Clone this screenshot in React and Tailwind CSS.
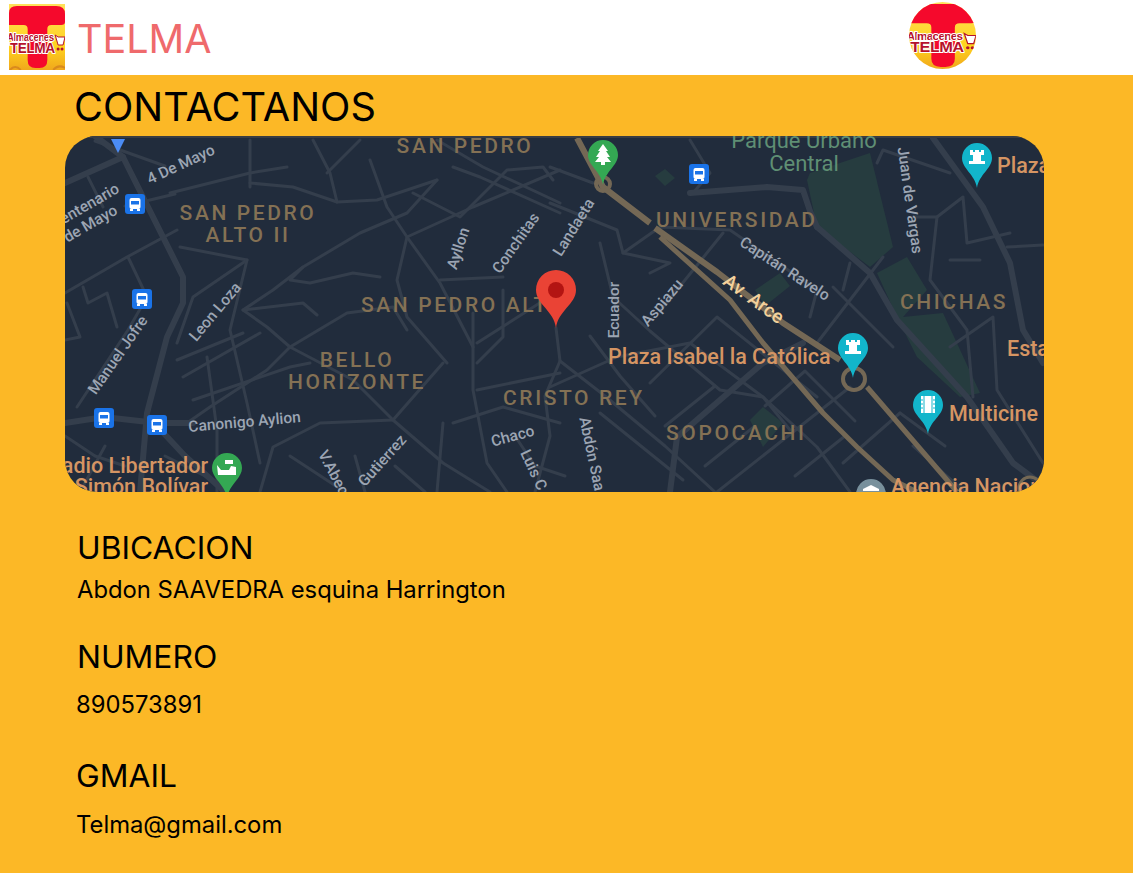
const minorRoads = [
  "185,4 185,51", "185,47 228,51 272,66 312,64 372,44", "105,57 185,37 222,31",
  "248,4 265,37 272,66", "295,4 262,37", "305,24 322,71 342,101 375,147 408,211",
  "342,101 332,144 342,181 382,227", "342,101 408,71 495,34",
  "372,44 342,77 295,97 238,131 208,154 178,174 202,191 225,211",
  "238,131 225,144 245,147 288,137 315,141", "178,174 238,167 252,179",
  "225,211 282,177 328,171 342,194", "225,211 202,234 145,271 122,287",
  "225,211 288,244 328,284 378,327 425,356", "378,227 328,284 255,287 208,311 195,356",
  "115,111 182,124 128,161 112,207", "182,124 165,194 182,267 195,327",
  "112,224 178,197", "118,241 195,197", "128,264 225,231 245,227",
  "142,221 152,294 152,356", "63,121 82,161 63,194 12,271", "0,157 62,121 112,94",
  "18,151 23,167 42,157 52,191", "0,204 15,201 2,167", "23,41 38,71",
  "408,177 408,254 422,327 442,356", "438,154 438,201 412,227", "412,207 495,154",
  "375,144 438,141", "412,254 495,237", "388,287 438,271 495,287", "378,287 372,356",
  "388,31 415,41 495,77", "348,57 395,81 442,34 478,31 488,44", "372,4 418,31 495,67",
  "485,67 552,94 558,117 605,127 585,137",
  "535,107 548,161 585,195 655,254 698,261 752,311 785,356",
  "558,117 595,91 665,94 752,154 745,181", "595,175 658,97",
  "485,251 552,221 625,207 698,261 725,294", "585,247 652,181 752,261",
  "652,356 785,251", "535,277 618,344", "768,151 828,211", "752,207 818,121",
  "778,327 835,277", "778,154 785,127", "848,81 872,81 865,144 902,194 908,261",
  "872,81 898,61 902,107 945,97", "885,124 915,124", "942,111 978,109",
  "885,211 928,181 932,254 978,327", "812,27 818,14 885,37", "625,4 645,37 628,57",
  "485,31 528,47", "491,192 495,225 480,260 485,300 470,356", "495,225 540,260 600,310 650,356",
  "700,270 740,235 790,285", "600,290 650,250", "640,330 690,290", "730,340 780,300",
  "0,300 30,320 60,330", "15,356 40,310", "100,320 140,340", "225,320 280,356", "290,320 300,356",
  "450,300 470,330 500,340", "525,200 555,240 590,280", "848,310 900,356", "835,277 880,310",
  "30,5 100,30", "60,70 110,58", "330,330 360,356",
];

const majorRoads = [
  "0,47 58,21 118,141 118,167 102,201 82,277 75,356",
  "0,287 39,281 92,287 128,287",
  "92,290 120,320 160,356",
  "752,91 805,137 832,184 902,261 948,327 979,350",
  "868,2 918,71 945,127 958,194 978,227",
  "625,57 702,51 738,54 745,75 752,91",
  "605,356 612,301 698,227 738,207",
  "30,0 58,21",
];

const arterials = [
  "512,2 538,51 585,87",
  "590,92 652,136 718,187 775,224",
  "595,101 665,164 698,207 758,277 792,311 828,344 852,356",
  "802,251 882,344 892,356",
];

const districts = [
  ["SAN PEDRO", 400, 17, "middle"],
  ["SAN PEDRO", 183, 84, "middle"],
  ["ALTO II", 183, 106, "middle"],
  ["SAN PEDRO ALTO", 296, 176, "start"],
  ["BELLO", 292, 231, "middle"],
  ["HORIZONTE", 292, 253, "middle"],
  ["CRISTO REY", 438, 269, "start"],
  ["SOPOCACHI", 601, 304, "start"],
  ["UNIVERSIDAD", 591, 91, "start"],
  ["CHICHAS", 835, 173, "start"],
];

const places = [
  ["Plaza Isabel la Católica", 543, 228, "start"],
  ["Multicine", 884, 285, "start"],
  ["Plaza", 932, 37, "start"],
  ["Esta", 942, 220, "start"],
  ["Agencia Nacional", 826, 358, "start"],
  ["Estadio Libertador", 143, 337, "end"],
  ["Simón Bolívar", 143, 358, "end"],
];

const streets = [
  ["4 De Mayo", 118, 33, -25],
  ["entenario", 27, 72, -30],
  ["de Mayo", 28, 92, -30],
  ["Leon Loza", 154, 179, -50],
  ["Manuel Jofre", 57, 222, -55],
  ["Canonigo Aylion", 180, 291, -5],
  ["Ayllon", 398, 114, -72],
  ["Conchitas", 455, 110, -55],
  ["Landaeta", 513, 94, -58],
  ["Ecuador", 554, 174, -90],
  ["Aspiazu", 601, 170, -50],
  ["Capitán Ravelo", 717, 137, 33],
  ["Juan de Vargas", 840, 65, 82],
  ["Chaco", 449, 305, -15],
  ["Luis C", 464, 336, 65],
  ["Abdón Saa", 522, 319, 78],
  ["V.Abec", 264, 339, 62],
  ["Gutierrez", 321, 328, -48],
];

const buses = [
  [70, 68],
  [77, 163],
  [39, 282],
  [92, 289],
  [634, 38],
];

const Pin = ({ x, y, r = 15, tip = 30, color, children }) => (
  <g transform={`translate(${x} ${y})`}>
    <path
      d={`M${-r} 0 A${r} ${r} 0 1 1 ${r} 0 C${r} ${r * 0.7} 2 ${tip * 0.55} 0 ${tip} C-2 ${tip * 0.55} ${-r} ${r * 0.7} ${-r} 0Z`}
      fill={color}
    />
    {children}
  </g>
);

const Tower = () => (
  <path d="M-7 -8h3v2h2v-2h4v2h2v-2h3v5h-3v6h4v3h-16v-3h4v-6h-3z" fill="#fff" />
);

const MapDrawing = () => (
  <svg viewBox="0 0 979 356" className="block h-full w-full" fontFamily="Roboto, sans-serif">
    <rect width="979" height="356" fill="#212c3c" />
    <g fill="#263c3f">
      <path d="M745 37 L805 17 L828 111 L805 131 L752 91 L742 44Z" />
      <path d="M812 137 L842 121 L862 154 L838 181 L878 177 L915 257 L895 261 L852 221 L832 181Z" />
      <path d="M690 154 L715 137 L725 150 L700 170Z" />
      <path d="M685 284 L698 271 L718 287 L698 311Z" />
      <path d="M590 40 L600 33 L610 42 L600 50Z" />
    </g>
    <g fill="none" stroke="#343e4c" strokeLinejoin="round" strokeLinecap="round">
      {minorRoads.map((points, i) => (
        <polyline key={i} points={points} strokeWidth="3" />
      ))}
      {majorRoads.map((points, i) => (
        <polyline key={i} points={points} strokeWidth="6" />
      ))}
    </g>
    <g fill="none" stroke="#746855" strokeLinejoin="round">
      {arterials.map((points, i) => (
        <polyline key={i} points={points} strokeWidth={i < 2 ? 6 : 5} />
      ))}
      <circle cx="789" cy="243" r="11" strokeWidth="4" />
      <circle cx="538" cy="48" r="7" strokeWidth="4" />
      <circle cx="965" cy="352" r="11" strokeWidth="3" />
    </g>
    <rect width="979" height="2" fill="#3a3d42" />
    {districts.map(([label, x, y, anchor]) => (
      <text key={label + x} x={x} y={y} textAnchor={anchor} fontSize="21" fontWeight="500" letterSpacing="2.600" fill="#847154">
        {label}
      </text>
    ))}
    <text x="739" y="12" textAnchor="middle" fontSize="22" fill="#5f8f74">Parque Urbano</text>
    <text x="739" y="35" textAnchor="middle" fontSize="22" fill="#5f8f74">Central</text>
    {streets.map(([label, x, y, angle]) => (
      <text key={label} textAnchor="middle" fontSize="15.500" fontWeight="500" fill="#9ca5b3" transform={`translate(${x} ${y}) rotate(${angle})`}>
        {label}
      </text>
    ))}
    <text textAnchor="middle" fontSize="19" fontWeight="500" fill="#f3d19c" transform="translate(685 168) rotate(36)">Av. Arce</text>
    {places.map(([label, x, y, anchor]) => (
      <text key={label + y} x={x} y={y} textAnchor={anchor} fontSize="21.500" fontWeight="500" fill="#d59563">
        {label}
      </text>
    ))}
    {buses.map(([x, y]) => (
      <g key={x} transform={`translate(${x - 10} ${y - 10})`}>
        <rect width="20" height="20" rx="3" fill="#1a73e8" />
        <rect x="4.500" y="4" width="11" height="11" rx="2" fill="#fff" />
        <rect x="6" y="7" width="8" height="3.500" fill="#1a73e8" />
        <rect x="5" y="15" width="3" height="2" fill="#fff" />
        <rect x="12" y="15" width="3" height="2" fill="#fff" />
      </g>
    ))}
    <path d="M46 3 H60 L53 17Z" fill="#4b8cf5" />
    <Pin x={538} y={19} color="#34a853" tip={30}>
      <path d="M0 -11 L5 -4 H3 L7 2 H4 L8 7 H2 V10 H-2 V7 H-8 L-4 2 H-7 L-3 -4 H-5Z" fill="#fff" />
    </Pin>
    <Pin x={912} y={22} color="#12b5cb" tip={30}><Tower /></Pin>
    <Pin x={788} y={212} color="#12b5cb" tip={30}><Tower /></Pin>
    <Pin x={863} y={269} color="#12b5cb" tip={29}>
      <rect x="-7" y="-9" width="14" height="17" fill="#fff" />
      <path d="M-4 -9V8M4 -9V8" stroke="#12b5cb" strokeWidth="1" />
      <path d="M-7 -5h2M-7 -1h2M-7 3h2M5 -5h2M5 -1h2M5 3h2" stroke="#12b5cb" strokeWidth="1" />
    </Pin>
    <Pin x={806} y={358} color="#78909c" tip={30}>
      <path d="M-8 -5 L0 -9 L8 -5 V-3 H-8Z" fill="#fff" />
    </Pin>
    <Pin x={162} y={332} color="#34a853" tip={30}>
      <path d="M-10 -3 L-6 2 H2 L4 -2 L9 -1 V7 H-9Z M-2 -8 H6 V-4 H-2Z" fill="#fff" />
    </Pin>
    <Pin x={491} y={154} r={20} tip={38} color="#ea4335">
      <circle r="8" fill="#b31412" />
    </Pin>
  </svg>
);

const Logo = ({ id }) => (
  <svg viewBox="0 0 57 66" preserveAspectRatio="none" className="block h-full w-full" fontFamily="Liberation Sans, sans-serif">
    <defs>
      <linearGradient id={id} x1="0" y1="0" x2="0" y2="1">
        <stop offset="0" stopColor="#ffe15a" />
        <stop offset="0.65" stopColor="#ffd21f" />
        <stop offset="1" stopColor="#f0a81c" />
      </linearGradient>
    </defs>
    <rect width="57" height="66" fill={`url(#${id})`} />
    <path d="M0 9 Q0 2 8 2 H48 Q57 2 57 10 V18 Q57 21 53 21 H43 Q39 21 39 25 V56 Q39 64 31 64 H27 Q19 64 19 56 V25 Q19 21 15 21 H0Z" fill="#f5092c" />
    <g stroke="#fff" strokeWidth="2" paintOrder="stroke" strokeLinejoin="round" fill="#b5122c" fontWeight="700">
      <text x="-2" y="37" fontSize="10" textLength="48">Almacenes</text>
      <text x="1" y="49" fontSize="14" textLength="46">TELMA</text>
    </g>
    <path d="M47 31 L50 33 H57 L55 41 H50 Z" fill="#fff" stroke="#b5122c" strokeWidth="1" />
    <circle cx="50" cy="45" r="1.500" fill="#b5122c" />
    <circle cx="54" cy="45" r="1.500" fill="#b5122c" />
    <path d="M1 66 Q6 60 12 66 M45 66 Q50 60 57 64" stroke="#d98a1e" strokeWidth="2" fill="none" />
  </svg>
);

const Info = ({ title, text, className, textClass }) => (
  <section className={className}>
    <h3 className="text-[31.800px] leading-[38px] text-black">{title}</h3>
    <p className={`text-[23.800px] leading-8 text-black ${textClass}`}>{text}</p>
  </section>
);

export default function App() {
  return (
    <div className="min-h-[873px] bg-[#fcb826] font-['Inter',sans-serif]">
      <header className="flex h-[75px] items-center bg-white">
        <div className="mb-0.5 ml-[9px] h-[66px] w-[56px]">
          <Logo id="logo-square" />
        </div>
        <h1 className="ml-3 w-[133px] pt-1 text-[39.500px] leading-none text-[#ef6a6c]">TELMA</h1>
        <div className="mb-1 ml-[699px] h-[67px] w-[67px] overflow-hidden rounded-full">
          <Logo id="logo-round" />
        </div>
      </header>

      <main className="pl-[65px]">
        <h2 className="pb-0.5 pl-[9px] pt-[5px] text-[39.700px] leading-[54px] text-black">CONTACTANOS</h2>
        <div className="h-[356px] w-[979px] overflow-hidden rounded-[32px]">
          <MapDrawing />
        </div>

        <Info className="mt-[37px] pl-3" textClass="mt-[7px]" title="UBICACION" text="Abdon SAAVEDRA esquina Harrington" />
        <Info className="mt-8 pl-3" textClass="mt-[13px] -ml-px" title="NUMERO" text="890573891" />
        <Info className="mt-9 pl-[11px]" textClass="mt-3.5" title="GMAIL" text="Telma@gmail.com" />
      </main>
    </div>
  );
}
